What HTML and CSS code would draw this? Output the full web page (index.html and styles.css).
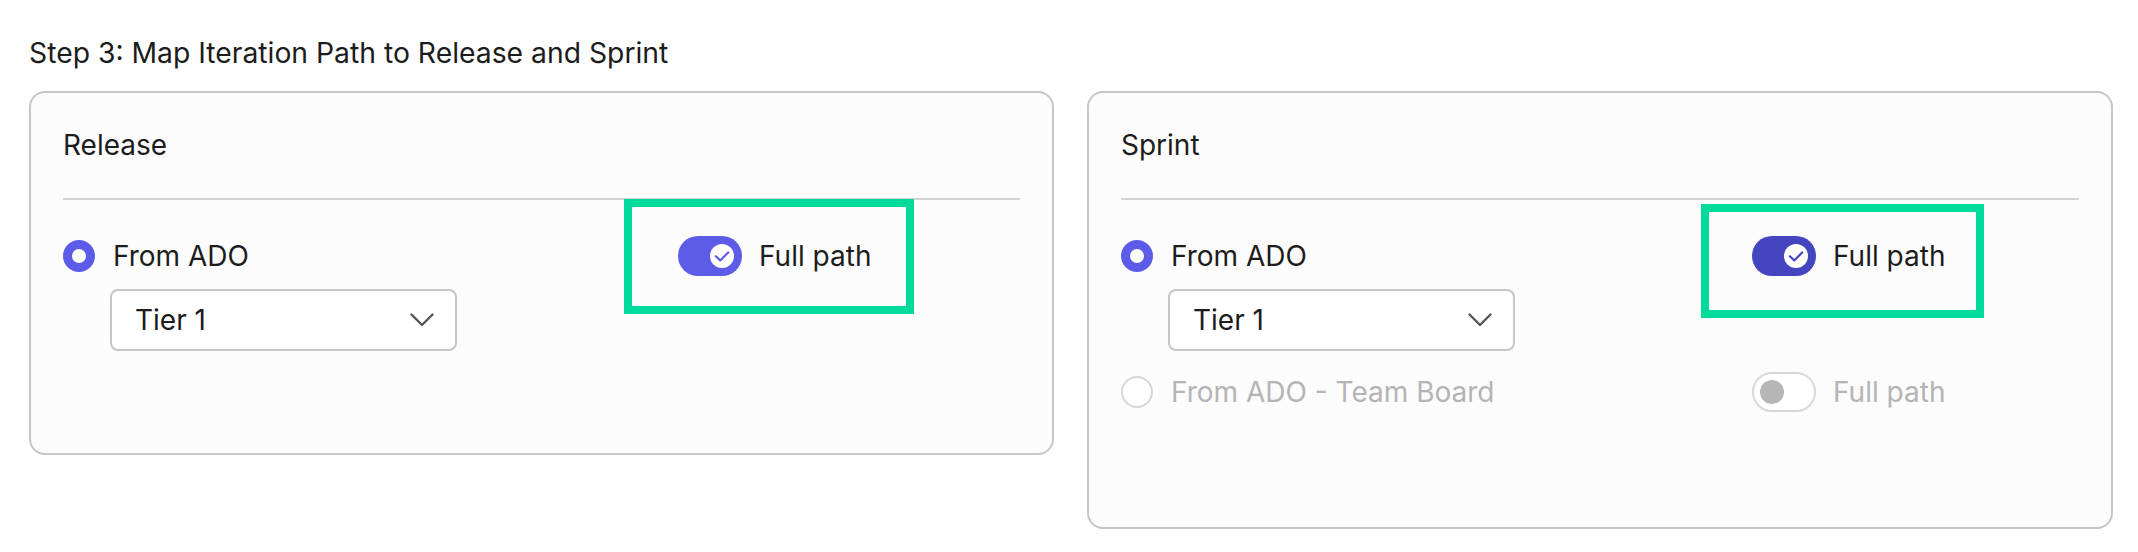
FILE: index.html
```html
<!DOCTYPE html>
<html>
<head>
<meta charset="utf-8">
<link rel="stylesheet" href="styles.css">
</head>
<body>
<div class="page">
  <h2 class="title">Step 3: Map Iteration Path to Release and Sprint</h2>
  <div class="cards">
    <section class="card card-release">
      <div class="card-head">Release</div>
      <div class="row row-release">
        <div class="opt">
          <span class="radio radio-on"></span>
          <span class="opt-label">From ADO</span>
        </div>
        <div class="tog-group">
          <span class="toggle toggle-on">
            <span class="knob">
              <svg viewBox="0 0 24 24" width="24" height="24"><path d="M5.8 12.3 L10.3 16.4 L18.2 8.4" fill="none" stroke="#5c5ce8" stroke-width="2.2" stroke-linecap="round" stroke-linejoin="round"/></svg>
            </span>
          </span>
          <span class="tog-label">Full path</span>
          <span class="hl hl-release"></span>
        </div>
      </div>
      <div class="select">
        <span>Tier 1</span>
        <svg class="chev" viewBox="0 0 24 14" width="24" height="14"><path d="M1.5 1.5 L12 12 L22.5 1.5" fill="none" stroke="#555" stroke-width="2.4" stroke-linecap="round" stroke-linejoin="round"/></svg>
      </div>
    </section>

    <section class="card card-sprint">
      <div class="card-head">Sprint</div>
      <div class="row row-sprint">
        <div class="opt">
          <span class="radio radio-on"></span>
          <span class="opt-label">From ADO</span>
        </div>
        <div class="tog-group">
          <span class="toggle toggle-on toggle-hover">
            <span class="knob">
              <svg viewBox="0 0 24 24" width="24" height="24"><path d="M5.8 12.3 L10.3 16.4 L18.2 8.4" fill="none" stroke="#4545bf" stroke-width="2.2" stroke-linecap="round" stroke-linejoin="round"/></svg>
            </span>
          </span>
          <span class="tog-label">Full path</span>
          <span class="hl hl-sprint"></span>
        </div>
      </div>
      <div class="select">
        <span>Tier 1</span>
        <svg class="chev" viewBox="0 0 24 14" width="24" height="14"><path d="M1.5 1.5 L12 12 L22.5 1.5" fill="none" stroke="#555" stroke-width="2.4" stroke-linecap="round" stroke-linejoin="round"/></svg>
      </div>
      <div class="row row-sprint row-disabled">
        <div class="opt">
          <span class="radio radio-off"></span>
          <span class="opt-label">From ADO - Team Board</span>
        </div>
        <div class="tog-group">
          <span class="toggle toggle-off"><span class="knob knob-off"></span></span>
          <span class="tog-label">Full path</span>
        </div>
      </div>
    </section>
  </div>
</div>
</body>
</html>
```

FILE: styles.css
```css
* { box-sizing: border-box; }
html, body { margin: 0; padding: 0; background: #ffffff; }
body {
  font-family: Inter, "Noto Sans", "Liberation Sans", sans-serif;
  color: #1c1c1c;
  font-size: 28px;
  line-height: 34px;
}
.page {
  padding: 36px 25px 0 29px;
}
.title {
  margin: 0;
  font-size: 28.3px;
  line-height: 34px;
  font-weight: 400;
}
.cards {
  margin-top: 21px;
  display: grid;
  grid-template-columns: 1025px 1026px;
  column-gap: 33px;
  align-items: start;
}
.card {
  border: 2px solid #c6c6c6;
  border-radius: 16px;
  background: #fcfcfc;
  padding: 35px 32px 102px 32px;
}
.card-sprint { padding-bottom: 115px; }
.card-head {
  padding-bottom: 36px;
  border-bottom: 2px solid #d4d4d4;
}
.row {
  display: grid;
  align-items: center;
  height: 40px;
  margin-top: 36px;
}
.row-release { grid-template-columns: 615px 1fr; }
.row-sprint { grid-template-columns: 631px 1fr; }
.row-disabled { margin-top: 21px; color: #b4b4b4; }
.opt {
  display: flex;
  align-items: center;
  gap: 18px;
}
.radio {
  width: 32px;
  height: 32px;
  border-radius: 50%;
  flex: none;
  background: #ffffff;
}
.radio-on { border: 9px solid #5c5ce8; }
.radio-off { border: 2px solid #d6d6d6; }
.tog-group {
  position: relative;
  display: flex;
  align-items: center;
  gap: 17px;
}
.toggle {
  width: 64px;
  height: 40px;
  border-radius: 20px;
  display: flex;
  align-items: center;
  flex: none;
}
.toggle-on {
  background: #5c5ce8;
  justify-content: flex-end;
  padding-right: 8px;
}
.toggle-hover { background: #4545bf; }
.toggle-off {
  background: #ffffff;
  border: 2px solid #d8d8d8;
  padding-left: 6px;
}
.knob {
  width: 24px;
  height: 24px;
  border-radius: 50%;
  background: #ffffff;
  display: block;
}
.knob svg { display: block; }
.knob-off { background: #b6b6b6; }
.hl {
  position: absolute;
  border: 8px solid #00db9b;
  pointer-events: none;
}
.hl-release { left: -54px; top: -37px; width: 290px; height: 115px; }
.hl-sprint { left: -51px; top: -32px; width: 283px; height: 114px; }
.select {
  margin-top: 13px;
  margin-left: 47px;
  width: 347px;
  height: 62px;
  border: 2px solid #c6c6c6;
  border-radius: 8px;
  background: #ffffff;
  display: flex;
  align-items: center;
  justify-content: space-between;
  padding: 0 21px 0 23px;
}
.chev { display: block; }
```
